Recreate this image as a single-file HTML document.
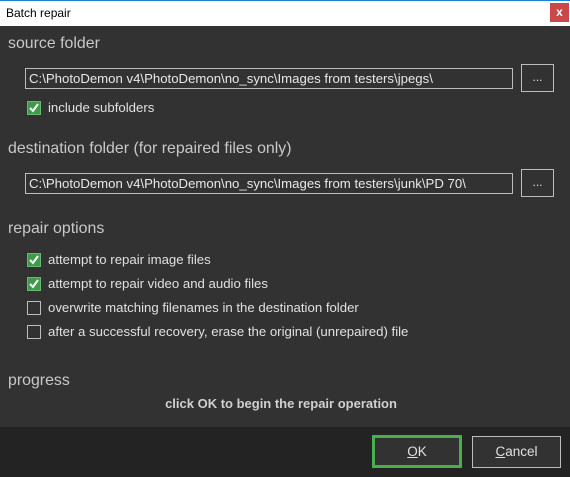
<!DOCTYPE html>
<html><head><style>
*{margin:0;padding:0;box-sizing:border-box}
body{width:570px;height:477px;background:#323232;font-family:"Liberation Sans",sans-serif;position:relative;overflow:hidden;color:#e0e0e0}
.title{position:absolute;left:0;top:0;width:570px;height:26px;background:#fff;border-top:1px solid #1883d7;color:#000;font-size:12px;padding:5px 0 0 6px}
.close{position:absolute;left:550px;top:3px;width:19px;height:19px;background:#c9484a;color:#fff;font-size:12px;font-weight:bold;text-align:center;line-height:18px}
.h{position:absolute;left:8px;font-size:15.9px;color:#c8c8c8}
.tb{position:absolute;left:25px;width:488px;height:21px;border:1px solid #bdbdbd;font-size:13.2px;padding:2px 0 0 3px;color:#e8e8e8;white-space:nowrap;overflow:hidden}
.btn{position:absolute;left:521px;width:33px;height:28px;border:1px solid #bdbdbd;text-align:center;font-size:12px;line-height:24px}
.cb{position:absolute;left:27px;width:14px;height:14px;border:1px solid #bdbdbd}
.cb.on{background:#3f9b4a;border-color:#69b873}
.cb.on svg{position:absolute;left:0;top:0}
.lbl{position:absolute;left:48px;font-size:13.2px;color:#e0e0e0;white-space:nowrap}
.foot{position:absolute;left:0;top:427px;width:570px;height:50px;background:#232323}
.ok{position:absolute;left:372px;top:435px;width:90px;height:33px;border:3px solid #47b04b;background:#323232;text-align:center;font-size:13.5px;line-height:27px}
.cancel{position:absolute;left:472px;top:436px;width:89px;height:32px;border:1px solid #bdbdbd;background:#323232;text-align:center;font-size:13.5px;line-height:29px}
</style></head><body>
<div class="title">Batch repair</div>
<div class="close">x</div>
<div class="h" style="top:35px">source folder</div>
<div class="tb" style="top:68px">C:\PhotoDemon v4\PhotoDemon\no_sync\Images from testers\jpegs\</div>
<div class="btn" style="top:64px">...</div>
<div class="cb on" style="top:101px"><svg width="12" height="12" viewBox="0 0 12 12"><path d="M2 6 L5 9 L10 2" stroke="#fff" stroke-width="2" fill="none"/></svg></div>
<div class="lbl" style="top:100px">include subfolders</div>
<div class="h" style="top:140px">destination folder (for repaired files only)</div>
<div class="tb" style="top:173px">C:\PhotoDemon v4\PhotoDemon\no_sync\Images from testers\junk\PD 70\</div>
<div class="btn" style="top:169px">...</div>
<div class="h" style="top:220px">repair options</div>
<div class="cb on" style="top:253px"><svg width="12" height="12" viewBox="0 0 12 12"><path d="M2 6 L5 9 L10 2" stroke="#fff" stroke-width="2" fill="none"/></svg></div>
<div class="lbl" style="top:252px">attempt to repair image files</div>
<div class="cb on" style="top:277px"><svg width="12" height="12" viewBox="0 0 12 12"><path d="M2 6 L5 9 L10 2" stroke="#fff" stroke-width="2" fill="none"/></svg></div>
<div class="lbl" style="top:276px">attempt to repair video and audio files</div>
<div class="cb" style="top:301px"></div>
<div class="lbl" style="top:300px">overwrite matching filenames in the destination folder</div>
<div class="cb" style="top:325px"></div>
<div class="lbl" style="top:324px">after a successful recovery, erase the original (unrepaired) file</div>
<div class="h" style="top:372px">progress</div>
<div style="position:absolute;left:0;width:562px;top:396px;text-align:center;font-size:13px;font-weight:bold;color:#d0d0d0">click OK to begin the repair operation</div>
<div class="foot"></div>
<div class="ok"><u>O</u>K</div>
<div class="cancel"><u>C</u>ancel</div>
</body></html>
